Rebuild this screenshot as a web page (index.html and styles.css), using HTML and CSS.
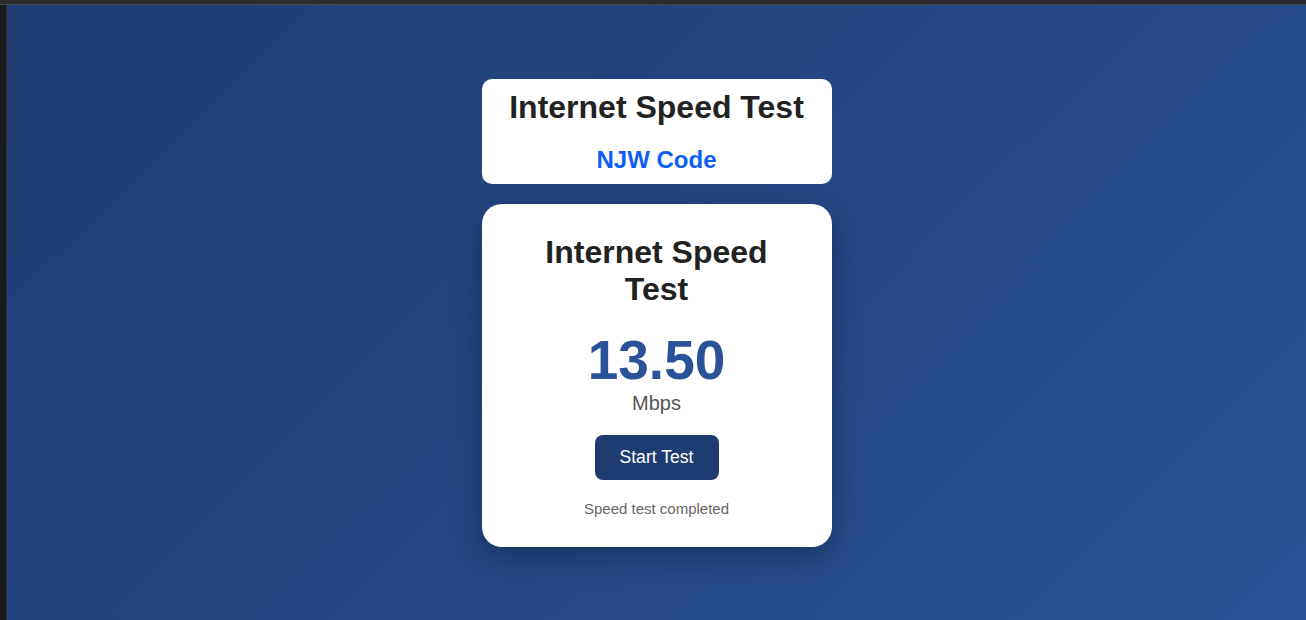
FILE: index.html
```html
<!DOCTYPE html>
<html lang="en">
<head>
<meta charset="utf-8">
<title>Internet Speed Test</title>
<link rel="stylesheet" href="styles.css">
</head>
<body>
<div class="frame">
  <div class="topbar"></div>
  <div class="row">
    <div class="sidebar"></div>
    <main class="stage">
      <div class="stack">
        <header class="brand-card">
          <h1 class="brand-title">Internet Speed Test</h1>
          <h2 class="brand-sub">NJW Code</h2>
        </header>
        <section class="test-card">
          <h1 class="test-title">Internet Speed Test</h1>
          <div class="speed">13.50</div>
          <div class="unit">Mbps</div>
          <button class="start-btn" type="button">Start Test</button>
          <p class="status">Speed test completed</p>
        </section>
      </div>
    </main>
  </div>
</div>
</body>
</html>
```

FILE: styles.css
```css
* { box-sizing: border-box; }
html, body {
  margin: 0;
  padding: 0;
  height: 100%;
  background: #1b1b1b;
  font-family: "Liberation Sans", Arial, sans-serif;
}
.frame {
  display: flex;
  flex-direction: column;
  height: 620px;
  overflow: hidden;
}
.topbar {
  height: 5px;
  flex: none;
  background: #2c2c2c;
  border-bottom: 1px solid #474747;
}
.row {
  display: flex;
  flex: 1;
  min-height: 0;
}
.sidebar {
  width: 7px;
  flex: none;
  background: #1a1a1a;
  border-right: 1px solid #2e2e2e;
}
.stage {
  flex: 1;
  display: flex;
  align-items: center;
  justify-content: center;
  background: linear-gradient(135deg, #1e3c72 0%, #2a5298 100%);
}
.stack {
  display: flex;
  flex-direction: column;
  gap: 20px;
  width: 350px;
}
.brand-card {
  background: #ffffff;
  border-radius: 10px;
  padding: 10px;
  text-align: center;
}
.brand-title {
  margin: 0 0 20px;
  font-size: 32px;
  font-weight: 700;
  color: #222222;
}
.brand-sub {
  margin: 0;
  font-size: 24px;
  font-weight: 700;
  color: #0d5ef5;
}
.test-card {
  background: #ffffff;
  border-radius: 20px;
  padding: 30px;
  text-align: center;
  box-shadow: 0 10px 30px rgba(0, 0, 0, 0.3);
  display: flex;
  flex-direction: column;
  align-items: center;
}
.test-title {
  margin: 0 0 20px;
  font-size: 32px;
  font-weight: 700;
  color: #222222;
}
.speed {
  font-size: 55px;
  font-weight: 700;
  color: #2a5298;
}
.unit {
  font-size: 20px;
  color: #555555;
}
.start-btn {
  margin-top: 20px;
  background: #1e3c72;
  color: #ffffff;
  border: none;
  border-radius: 8px;
  padding: 12px 25px;
  font-family: inherit;
  font-size: 17.6px;
  cursor: pointer;
}
.status {
  margin: 20px 0 0;
  font-size: 15px;
  color: #666666;
}
```
